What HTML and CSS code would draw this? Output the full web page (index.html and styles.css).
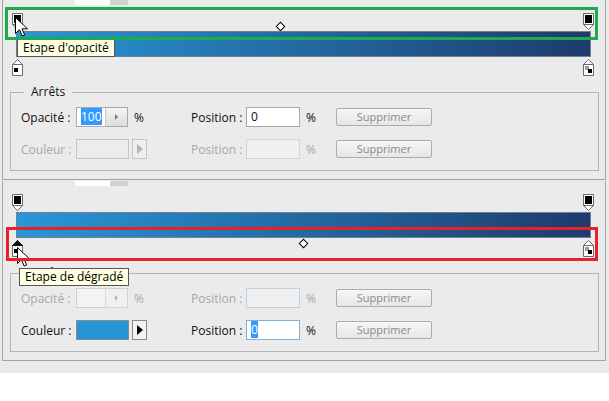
FILE: index.html
```html
<!DOCTYPE html>
<html lang="fr">
  <head>
    <meta charset="UTF-8" />
    <title>Éditeur de dégradé</title>
    <link rel="stylesheet" href="styles.css">
  </head>
  <body>
    <div class="dialog">
      <!-- opacity stop selected -->
      <div class="section first">
        <div class="tab"></div>
        <div class="ramp">
          <span class="stop top left">
            <svg width="11" height="17" viewBox="0 0 11 17"><path d="M.5 .5h10v11l-5 5-5-5z" fill="#fff" stroke="#6a6a6a"/><path d="M.5 11.5h10" stroke="#6a6a6a"/><rect x="2" y="2" width="7" height="8" fill="#000"/></svg>
          </span>
          <span class="stop top right">
            <svg width="11" height="17" viewBox="0 0 11 17"><path d="M.5 .5h10v11l-5 5-5-5z" fill="#fff" stroke="#6a6a6a"/><path d="M.5 11.5h10" stroke="#6a6a6a"/><rect x="2" y="2" width="7" height="8" fill="#000"/></svg>
          </span>
          <span class="midpoint upper"></span>
          <div class="bar"></div>
          <span class="stop bottom left">
            <svg width="11" height="17" viewBox="0 0 11 17"><path d="M5.5 .5l5 5v11h-10v-11z" fill="#fff" stroke="#6a6a6a"/><path d="M.5 5.5h10" stroke="#6a6a6a"/><rect x="2" y="9" width="4" height="4" fill="#000"/></svg>
          </span>
          <span class="stop bottom right">
            <svg width="11" height="17" viewBox="0 0 11 17"><path d="M5.5 .5l5 5v11h-10v-11z" fill="#fff" stroke="#6a6a6a"/><path d="M.5 5.5h10" stroke="#6a6a6a"/><rect x="2" y="7" width="4" height="4" fill="#9a9a9a"/><rect x="5" y="10" width="4" height="4" fill="#000"/></svg>
          </span>
        </div>
        <div class="stops">
          <span class="legend">Arrêts</span>
          <div class="row">
            <span class="label">Opacité :</span>
            <div class="cell">
              <div class="spin"><span class="value"><span class="sel">100</span></span><span class="spin-btn"></span></div>
              <span>%</span>
            </div>
            <span class="label">Position :</span>
            <div class="cell">
              <div class="field">0</div>
              <span>%</span>
            </div>
            <button class="btn">Supprimer</button>
          </div>
          <div class="row off">
            <span class="label">Couleur :</span>
            <div class="cell">
              <div class="picker"><span class="swatch"></span><span class="swatch-btn"></span></div>
            </div>
            <span class="label">Position :</span>
            <div class="cell">
              <div class="field"></div>
              <span>%</span>
            </div>
            <button class="btn">Supprimer</button>
          </div>
        </div>
      </div>

      <!-- colour stop selected -->
      <div class="section">
        <div class="tab"></div>
        <div class="ramp">
          <span class="stop top left">
            <svg width="11" height="17" viewBox="0 0 11 17"><path d="M.5 .5h10v11l-5 5-5-5z" fill="#fff" stroke="#6a6a6a"/><path d="M.5 11.5h10" stroke="#6a6a6a"/><rect x="2" y="2" width="7" height="8" fill="#000"/></svg>
          </span>
          <span class="stop top right">
            <svg width="11" height="17" viewBox="0 0 11 17"><path d="M.5 .5h10v11l-5 5-5-5z" fill="#fff" stroke="#6a6a6a"/><path d="M.5 11.5h10" stroke="#6a6a6a"/><rect x="2" y="2" width="7" height="8" fill="#000"/></svg>
          </span>
          <div class="bar"></div>
          <span class="midpoint lower"></span>
          <span class="stop bottom left">
            <svg width="11" height="17" viewBox="0 0 11 17"><path d="M5.5 .5l5 5v11h-10v-11z" fill="#fff" stroke="#6a6a6a"/><path d="M5.5 .5l5 5h-10z" fill="#111" stroke="#111"/><rect x="2" y="9" width="4" height="4" fill="#000"/></svg>
          </span>
          <span class="stop bottom right">
            <svg width="11" height="17" viewBox="0 0 11 17"><path d="M5.5 .5l5 5v11h-10v-11z" fill="#fff" stroke="#6a6a6a"/><path d="M.5 5.5h10" stroke="#6a6a6a"/><rect x="2" y="7" width="4" height="4" fill="#9a9a9a"/><rect x="5" y="10" width="4" height="4" fill="#000"/></svg>
          </span>
        </div>
        <div class="stops">
          <span class="legend">Arrêts</span>
          <div class="row off">
            <span class="label">Opacité :</span>
            <div class="cell">
              <div class="spin"><span class="value"></span><span class="spin-btn"></span></div>
              <span>%</span>
            </div>
            <span class="label">Position :</span>
            <div class="cell">
              <div class="field tinted"></div>
              <span>%</span>
            </div>
            <button class="btn">Supprimer</button>
          </div>
          <div class="row">
            <span class="label">Couleur :</span>
            <div class="cell">
              <div class="picker"><span class="swatch"></span><span class="swatch-btn"></span></div>
            </div>
            <span class="label">Position :</span>
            <div class="cell">
              <div class="field focus"><span class="sel">0</span></div>
              <span>%</span>
            </div>
            <button class="btn">Supprimer</button>
          </div>
        </div>
      </div>

      <svg class="cursor one" width="13" height="21" viewBox="0 0 13 21"><path d="M.5 .5v16l4-3.8 2.7 6.3 2.4-1-2.6-6.2h5.5z" fill="#fff" stroke="#000"/></svg>
      <svg class="cursor two" width="13" height="21" viewBox="0 0 13 21"><path d="M.5 .5v16l4-3.8 2.7 6.3 2.4-1-2.6-6.2h5.5z" fill="#fff" stroke="#000"/></svg>
      <div class="tip one">Etape d'opacité</div>
      <div class="tip two">Etape de dégradé</div>
      <div class="hl green"></div>
      <div class="hl red"></div>
    </div>
  </body>
</html>
```

FILE: styles.css
```css
body {
  margin: 0;
  background: #fff;
  font-family: "Open Sans", "DejaVu Sans", sans-serif;
  font-size: 12px;
  color: #111;
}
.dialog {
  position: relative;
  width: 609px;
  height: 373px;
  background: #ebebeb;
  overflow: hidden;
}
.section {
  box-sizing: border-box;
  width: 604px;
  height: 180px;
  margin-left: 2px;
  border: 1px solid #a3a3a3;
  border-top: 0;
}
.section.first {
  margin-top: -1px;
}
.tab {
  width: 53px;
  height: 5px;
  margin: 1px 0 0 72px;
  background: linear-gradient(to right, #fff 35px, #d2d2d2 35px);
}
.ramp {
  position: relative;
  width: 575px;
  margin: 8px 0 0 13px;
  padding: 18px 0 19px;
}
.bar {
  box-sizing: border-box;
  height: 26px;
  border: 1px solid #6f8197;
  background: linear-gradient(to right, #2997d7, #1e3b6b);
}
.stop {
  position: absolute;
  width: 11px;
  height: 17px;
}
.stop svg {
  display: block;
}
.stop.top {
  top: 0;
}
.stop.bottom {
  bottom: 0;
}
.stop.left {
  left: -4px;
}
.stop.right {
  right: -3px;
}
.midpoint {
  position: absolute;
  width: 5px;
  height: 5px;
  border: 1px solid #000;
  background: #fff;
  transform: rotate(45deg);
}
.midpoint.upper {
  left: 261px;
  top: 10px;
}
.midpoint.lower {
  left: 284px;
  top: 46px;
}
.stops {
  position: relative;
  box-sizing: border-box;
  width: 589px;
  margin: 16px 0 0 7px;
  padding: 14px 0 11px 10px;
  border: 1px solid #b4b4b4;
  display: flex;
  flex-direction: column;
  gap: 12px;
}
.legend {
  position: absolute;
  top: -9px;
  left: 13px;
  padding: 0 7px;
  background: #ebebeb;
  line-height: 16px;
}
.row {
  display: grid;
  grid-template-columns: 55px 115px 55px 90px 96px;
  align-items: center;
  height: 20px;
}
.cell {
  display: flex;
  align-items: center;
  gap: 6px;
}
.spin {
  display: flex;
  box-sizing: border-box;
  width: 52px;
  height: 20px;
  border: 1px solid #a9a9a9;
  background: #fff;
}
.spin .value {
  flex: 1;
  padding-left: 4px;
  line-height: 18px;
}
.spin-btn {
  width: 21px;
  border-left: 1px solid #c9c9c9;
  background: linear-gradient(#f5f5f5, #dcdcdc);
  display: flex;
  align-items: center;
  justify-content: center;
}
.spin-btn::after {
  content: "";
  border-left: 3px solid #777;
  border-top: 3px solid transparent;
  border-bottom: 3px solid transparent;
}
.sel {
  background: #3399ff;
  color: #fff;
}
.field {
  box-sizing: border-box;
  width: 54px;
  height: 20px;
  border: 1px solid #a9a9a9;
  background: #fff;
  padding-left: 4px;
  line-height: 18px;
}
.field.focus {
  border-color: #7fb0e0;
}
.picker {
  display: flex;
  gap: 3px;
}
.swatch {
  box-sizing: border-box;
  width: 53px;
  height: 20px;
  border: 1px solid #8b8b8b;
  background: #2596d5;
}
.swatch-btn {
  box-sizing: border-box;
  width: 15px;
  height: 20px;
  border: 1px solid #888;
  background: #f2f2f2;
  display: flex;
  align-items: center;
  justify-content: center;
}
.swatch-btn::after {
  content: "";
  border-left: 6px solid #000;
  border-top: 5px solid transparent;
  border-bottom: 5px solid transparent;
}
.btn {
  box-sizing: border-box;
  width: 96px;
  height: 18px;
  padding: 0;
  border: 1px solid #ababab;
  border-radius: 2px;
  background: linear-gradient(#f7f7f7, #e6e6e6);
  color: #8a8a8a;
  font-family: "Open Sans", "DejaVu Sans", sans-serif;
  font-size: 11px;
  line-height: 16px;
}
.off {
  color: #a8a8a8;
}
.off .spin {
  border-color: #d0d0d0;
  background: #f3f3f3;
}
.off .spin-btn {
  border-left-color: #dadada;
  background: #f0f0f0;
}
.off .spin-btn::after {
  border-left-color: #b0b0b0;
}
.off .field {
  border-color: #d4d4d4;
  background: #f0f0f0;
}
.off .field.tinted {
  border-color: #b9d3e6;
}
.off .swatch {
  border-color: #c5c5c5;
  background: #ececec;
}
.off .swatch-btn {
  border-color: #c5c5c5;
  background: #efefef;
}
.off .swatch-btn::after {
  border-left-color: #b4b4b4;
}
.cursor {
  position: absolute;
}
.cursor.one {
  left: 15px;
  top: 17px;
}
.cursor.two {
  left: 17px;
  top: 247px;
}
.tip {
  position: absolute;
  background: #ffffe1;
  border: 1px solid #555;
  padding: 0 5px;
  line-height: 16px;
  color: #000;
}
.tip.one {
  left: 17px;
  top: 39px;
}
.tip.two {
  left: 19px;
  top: 268px;
}
.hl {
  position: absolute;
  box-sizing: border-box;
  border: 3px solid;
}
.hl.green {
  left: 5px;
  top: 7px;
  width: 593px;
  height: 33px;
  border-color: #1dab50;
}
.hl.red {
  left: 6px;
  top: 227px;
  width: 592px;
  height: 34px;
  border-color: #e8202a;
}
```
